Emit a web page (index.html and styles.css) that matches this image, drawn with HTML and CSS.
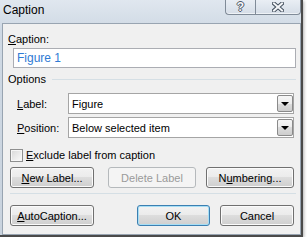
FILE: index.html
```html
<!DOCTYPE html>
<html lang="en">
<head>
  <meta charset="UTF-8">
  <title>Caption</title>
  <link rel="stylesheet" href="styles.css">
</head>
<body>

  <div class="window">
    <!-- title bar -->
    <div class="titlebar">
      <span class="title">Caption</span>
      <div class="caption-btns">
        <span class="cbtn help"><span class="help-glyph">?</span></span>
        <span class="cbtn close">
          <svg width="12" height="10" viewBox="0 0 12 10">
            <path d="M2 1.5 L10 8.5 M10 1.5 L2 8.5" stroke="#44505e" stroke-width="4" stroke-linecap="square" fill="none"/>
            <path d="M2 1.5 L10 8.5 M10 1.5 L2 8.5" stroke="#f4f6f9" stroke-width="2" stroke-linecap="square" fill="none"/>
          </svg>
        </span>
      </div>
    </div>

    <div class="client">
      <div class="field-label"><u>C</u>aption:</div>
      <div class="textbox">Figure 1</div>

      <div class="group-title"><span>Options</span><span class="rule"></span></div>

      <div class="row first">
        <span class="row-label"><u>L</u>abel:</span>
        <div class="select"><span class="select-text">Figure</span><span class="drop"></span></div>
      </div>
      <div class="row">
        <span class="row-label"><u>P</u>osition:</span>
        <div class="select"><span class="select-text">Below selected item</span><span class="drop"></span></div>
      </div>

      <div class="check">
        <span class="box"></span>
        <span><u>E</u>xclude label from caption</span>
      </div>

      <div class="btn-row">
        <span class="btn btn-new"><u>N</u>ew Label...</span>
        <span class="btn btn-del disabled">Delete Label</span>
        <span class="btn btn-num">N<u>u</u>mbering...</span>
      </div>

      <div class="sep"></div>

      <div class="btn-row second">
        <span class="btn btn-auto"><u>A</u>utoCaption...</span>
        <span class="btn btn-ok default">OK</span>
        <span class="btn btn-cancel">Cancel</span>
      </div>
    </div>
  </div>

</body>
</html>
```

FILE: styles.css
```css
* {
  box-sizing: border-box;
}
body {
  margin: 0;
  background: #fff;
  font-family: "Liberation Sans", Arial, sans-serif;
  font-size: 11px;
  color: #000;
}
u {
  text-decoration: underline;
  text-underline-offset: 1px;
}
.window {
  width: 303px;
  height: 237px;
  display: flex;
  flex-direction: column;
  border-right: 2px solid #4a4a4a;
  border-bottom: 2px solid #4a4a4a;
  background: linear-gradient(#e0e7ef, #cfd9e4 30px, #c9d3de);
  box-shadow: 1px 1px 3px rgba(0, 0, 0, 0.3);
}

/* title bar */
.titlebar {
  height: 23px;
  display: flex;
  justify-content: space-between;
  align-items: flex-start;
}
.title {
  font-size: 12px;
  line-height: 20px;
  padding-left: 3px;
}
.caption-btns {
  display: flex;
}
.cbtn {
  height: 15px;
  display: flex;
  align-items: center;
  justify-content: center;
  border: 1px solid #808b98;
  border-top: none;
  background: linear-gradient(#e9eef4, #d5dde7);
  box-shadow: inset 0 -1px 0 #eef2f6;
}
.help {
  width: 30px;
  border-right: none;
  border-radius: 0 0 0 4px;
}
.close {
  width: 46px;
  border-radius: 0 0 4px 0;
}
.help-glyph {
  font-size: 12px;
  font-weight: bold;
  line-height: 12px;
  color: #f4f6f9;
  text-shadow: 1px 0 0 #4d5866, -1px 0 0 #4d5866, 0 1px 0 #4d5866, 0 -1px 0 #4d5866;
}

/* client area */
.client {
  margin-left: 2px;
  width: 299px;
  height: 212px;
  border: 1px solid #98a4b1;
  background: #f0f0f0;
  padding: 7px 4px 0 5px;
}
.field-label {
  line-height: 16px;
}
.textbox {
  margin: 1px 0 0 5px;
  height: 20px;
  border: 1px solid #abadb3;
  background: #fff;
  color: #2f7bd4;
  font-size: 12px;
  line-height: 18px;
  padding-left: 3px;
}
.group-title {
  display: flex;
  align-items: center;
  height: 16px;
  margin-top: 3px;
}
.rule {
  flex: 1;
  height: 1px;
  margin-left: 6px;
  background: #d5dfe5;
}
.row {
  display: flex;
  align-items: center;
  margin: 3px 0 0 9px;
}
.row.first {
  margin-top: 6px;
}
.row-label {
  width: 51px;
}
.select {
  width: 226px;
  height: 21px;
  display: flex;
  align-items: center;
  padding: 1px 0 1px 3px;
  border: 1px solid #a5a5a5;
  background: #fff;
}
.select-text {
  flex: 1;
}
.drop {
  width: 16px;
  height: 17px;
  display: flex;
  align-items: center;
  justify-content: center;
  border: 1px solid #8a8a8a;
  border-radius: 2px;
  background: linear-gradient(#f6f6f6, #ececec 50%, #dcdcdc 50%, #cdcdcd);
}
.drop::after {
  content: "";
  border-left: 4px solid transparent;
  border-right: 4px solid transparent;
  border-top: 4px solid #000;
}

/* checkbox */
.check {
  display: flex;
  align-items: center;
  height: 16px;
  margin: 9px 0 0 2px;
}
.box {
  width: 13px;
  height: 13px;
  margin-right: 3px;
  border: 1px solid #8e8f8f;
  background: linear-gradient(135deg, #d8d8d8, #fbfbfb);
  box-shadow: inset 0 0 0 1px #f6f6f6;
}

/* buttons */
.btn-row {
  display: flex;
  margin-top: 4px;
}
.btn-row.second {
  margin-top: 11px;
}
.btn {
  height: 21px;
  display: flex;
  align-items: center;
  justify-content: center;
  border: 1px solid #707070;
  border-radius: 3px;
  background: linear-gradient(#f2f2f2, #ebebeb 50%, #dddddd 50%, #cfcfcf);
  box-shadow: inset 0 0 0 1px #fbfbfb;
}
.btn.disabled {
  color: #9a9a9a;
  border-color: #b5b9bc;
  background: #f4f4f4;
  box-shadow: none;
}
.btn.default {
  border-color: #3c7fb1;
  box-shadow: inset 0 0 0 1px #a6def5;
}
.btn-new { width: 84px; margin-left: 2px; }
.btn-del { width: 88px; margin-left: 14px; }
.btn-num { width: 88px; margin-left: 10px; }
.btn-auto { width: 84px; margin-left: 2px; }
.btn-ok { width: 73px; margin-left: 43px; }
.btn-cancel { width: 74px; margin-left: 10px; }
.sep {
  height: 1px;
  margin: 5px 0 0 2px;
  background: #d5dfe5;
}
```
